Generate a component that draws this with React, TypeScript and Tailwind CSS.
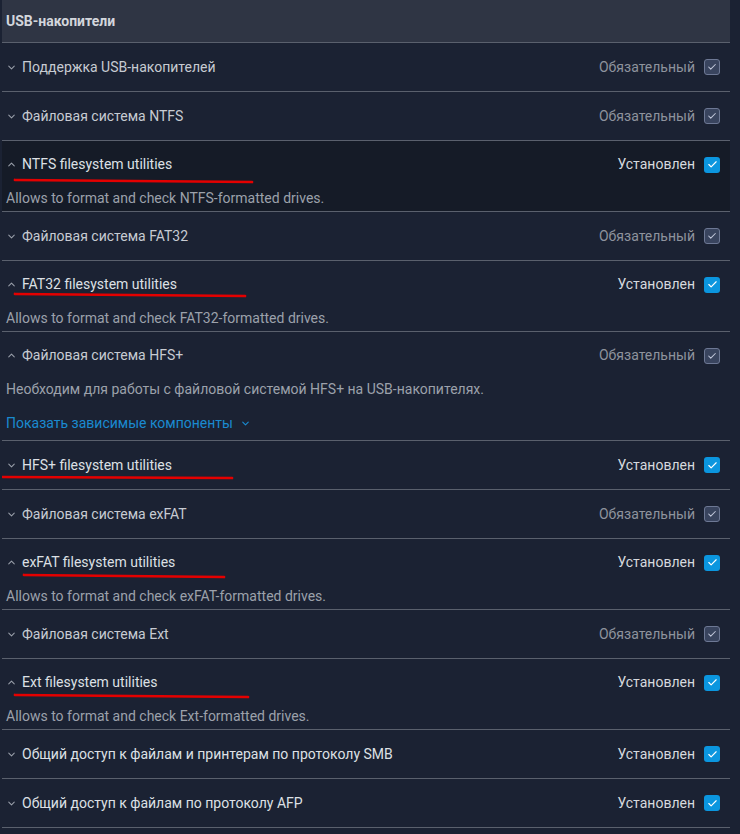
import { ChevronDown, ChevronUp, Check } from 'lucide-react';

type Item = {
  title: string;
  status: 'required' | 'installed';
  open?: boolean;
  desc?: string;
  deps?: boolean;
  dark?: boolean;
  mark?: { x1: number; y1: number; x2: number; y2: number };
};

const ITEMS: Item[] = [
  { title: 'Поддержка USB-накопителей', status: 'required' },
  { title: 'Файловая система NTFS', status: 'required' },
  {
    title: 'NTFS filesystem utilities',
    status: 'installed',
    open: true,
    dark: true,
    desc: 'Allows to format and check NTFS-formatted drives.',
    mark: { x1: 13, y1: 39, x2: 250, y2: 41 },
  },
  { title: 'Файловая система FAT32', status: 'required' },
  {
    title: 'FAT32 filesystem utilities',
    status: 'installed',
    open: true,
    desc: 'Allows to format and check FAT32-formatted drives.',
    mark: { x1: 13, y1: 33, x2: 243, y2: 35 },
  },
  {
    title: 'Файловая система HFS+',
    status: 'required',
    open: true,
    desc: 'Необходим для работы с файловой системой HFS+ на USB-накопителях.',
    deps: true,
  },
  {
    title: 'HFS+ filesystem utilities',
    status: 'installed',
    mark: { x1: 1, y1: 36, x2: 230, y2: 37 },
  },
  { title: 'Файловая система exFAT', status: 'required' },
  {
    title: 'exFAT filesystem utilities',
    status: 'installed',
    open: true,
    desc: 'Allows to format and check exFAT-formatted drives.',
    mark: { x1: 22, y1: 36, x2: 222, y2: 38 },
  },
  { title: 'Файловая система Ext', status: 'required' },
  {
    title: 'Ext filesystem utilities',
    status: 'installed',
    open: true,
    desc: 'Allows to format and check Ext-formatted drives.',
    mark: { x1: 13, y1: 36, x2: 246, y2: 38 },
  },
  { title: 'Общий доступ к файлам и принтерам по протоколу SMB', status: 'installed' },
  { title: 'Общий доступ к файлам по протоколу AFP', status: 'installed' },
];

function Box({ installed }: { installed: boolean }) {
  return installed ? (
    <span className="w-4 h-4 rounded-[3px] bg-[#0b96df] flex items-center justify-center">
      <Check className="w-[11px] h-[11px] text-white" strokeWidth={2.5} />
    </span>
  ) : (
    <span className="w-4 h-4 rounded-[3px] bg-[#39445e] border border-[#6d7894] flex items-center justify-center">
      <Check className="w-[10px] h-[10px] text-[#c3c9dc]" strokeWidth={2.5} />
    </span>
  );
}

function Row({ item }: { item: Item }) {
  const installed = item.status === 'installed';
  const Chevron = item.open ? ChevronUp : ChevronDown;
  return (
    <div
      className={`relative border-b border-[#5a606d] ${item.dark ? 'bg-[#151b27]' : ''}`}
    >
      <div
        className={`flex items-center justify-between pl-1 pr-[10px] ${
          item.open ? 'h-[47px]' : 'h-12'
        }`}
      >
        <div className="flex items-center gap-[5px]">
          <Chevron className="w-[11px] h-[11px] text-[#9aa0ab]" strokeWidth={2.25} />
          <span className={installed ? 'text-[#dde0e5]' : 'text-[#c7cbd2]'}>{item.title}</span>
        </div>
        <div className="flex items-center gap-[9px]">
          <span className={installed ? 'text-[#d6d9de]' : 'text-[#8e939d]'}>
            {installed ? 'Установлен' : 'Обязательный'}
          </span>
          <Box installed={installed} />
        </div>
      </div>
      {item.open && item.desc && (
        <div className={`px-1 ${item.deps ? 'pb-[7px]' : 'pb-[3px]'}`}>
          <p className="leading-5 text-[#9ca1ab]">{item.desc}</p>
          {item.deps && (
            <p className="mt-[14px] leading-5 text-[#1a8ad0] flex items-center gap-[7px]">
              Показать зависимые компоненты
              <ChevronDown className="w-[11px] h-[11px]" strokeWidth={2.5} />
            </p>
          )}
        </div>
      )}
      {item.mark && (
        <svg className="absolute left-0 top-0 pointer-events-none" width="260" height="60">
          <line
            x1={item.mark.x1}
            y1={item.mark.y1}
            x2={item.mark.x2}
            y2={item.mark.y2}
            stroke="#e40000"
            strokeWidth="2.75"
            strokeLinecap="round"
          />
        </svg>
      )}
    </div>
  );
}

export default function App() {
  return (
    <div className="min-h-[834px] bg-[#1b2233] font-['Roboto',sans-serif] text-[14px]">
      <div className="w-[728px] ml-[2px]">
        <div className="h-[43px] bg-[#2f3544] border-b border-[#5a606d] flex items-center px-1">
          <span className="font-bold text-[#d3d6dc]">USB-накопители</span>
        </div>
        {ITEMS.map((item) => (
          <Row key={item.title} item={item} />
        ))}
      </div>
    </div>
  );
}
